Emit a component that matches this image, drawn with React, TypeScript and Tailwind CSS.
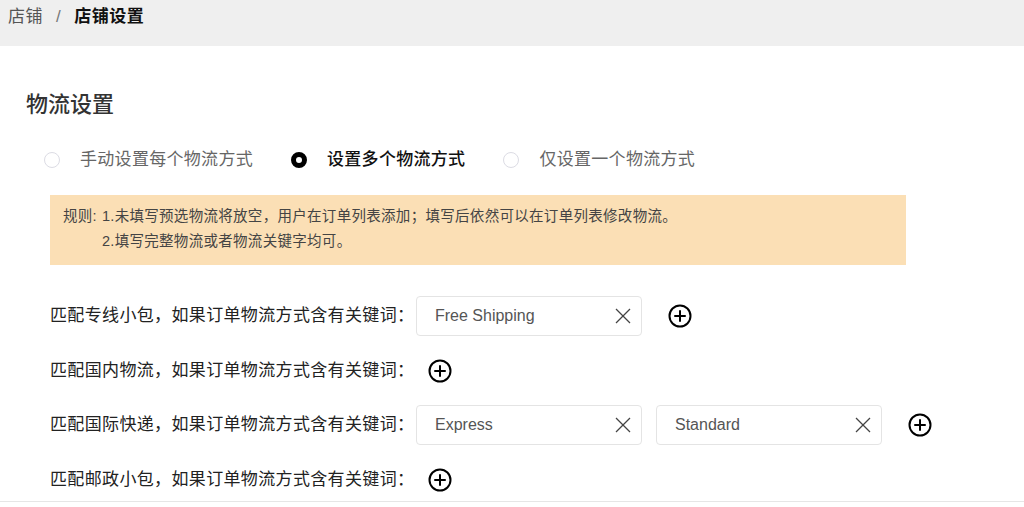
import React from "react";

const font = { fontFamily: '"Liberation Sans", "Noto Sans CJK SC", sans-serif' };

function Radio({ checked, label }: { checked?: boolean; label: string }) {
  return (
    <div className="flex items-center">
      {checked ? (
        <span className="box-border h-[16px] w-[16px] rounded-full border-[5px] border-black bg-white" />
      ) : (
        <span className="box-border h-[16px] w-[16px] rounded-full border border-[#dcdce4] bg-white" />
      )}
      <span
        className={
          "ml-[20px] text-[17px] leading-[24px] tracking-[0.3px] " +
          (checked ? "font-medium text-[#111]" : "text-[#666]")
        }
      >
        {label}
      </span>
    </div>
  );
}

function PlusIcon({ className }: { className?: string }) {
  return (
    <svg
      className={className}
      width="24"
      height="24"
      viewBox="0 0 24 24"
      fill="none"
      stroke="#000"
      strokeWidth="2"
      strokeLinecap="round"
    >
      <circle cx="12" cy="12" r="10.5" />
      <line x1="12" y1="7" x2="12" y2="17" />
      <line x1="7" y1="12" x2="17" y2="12" />
    </svg>
  );
}

function Tag({ text }: { text: string }) {
  return (
    <div className="mr-[14px] box-border flex h-[40px] w-[226px] items-center justify-between rounded-[4px] border border-[#e4e4e4] bg-white pl-[18px] pr-[9px]">
      <span className="text-[16px] text-[#555]">{text}</span>
      <svg width="18" height="18" viewBox="0 0 18 18" stroke="#444" strokeWidth="1.3" fill="none">
        <line x1="2" y1="2" x2="16" y2="16" />
        <line x1="16" y1="2" x2="2" y2="16" />
      </svg>
    </div>
  );
}

function Row({ label, tags }: { label: string; tags: string[] }) {
  return (
    <div className="flex h-[40px] items-center">
      <div className="w-[366px] text-[17px] leading-[24px] tracking-[0.35px] text-[#222]">{label}</div>
      {tags.map((t) => (
        <Tag key={t} text={t} />
      ))}
      <PlusIcon className="ml-[12px]" />
    </div>
  );
}

export default function App() {
  return (
    <div className="h-[507px] w-[1024px] overflow-hidden bg-white" style={font}>
      <div className="h-[46px] bg-[#efefef] pl-[8px] pt-[5px]">
        <div className="flex items-center text-[17px] leading-[24px] tracking-[0.5px]">
          <span className="text-[#555]">店铺</span>
          <span className="mx-[13px] text-[#777]">/</span>
          <span className="font-semibold text-[#111]">店铺设置</span>
        </div>
      </div>

      <div className="pt-[44px]">
        <div className="pl-[26px] text-[22px] font-medium leading-[30px] text-[#333]">物流设置</div>

        <div className="mt-[28px] flex gap-[38px] pl-[44px]">
          <Radio label="手动设置每个物流方式" />
          <Radio checked label="设置多个物流方式" />
          <Radio label="仅设置一个物流方式" />
        </div>

        <div className="ml-[50px] mt-[23px] box-border flex h-[70px] w-[856px] bg-[#fbdfb5] pl-[13px] pt-[9px] text-[14.5px] leading-[25px] tracking-[0.3px] text-[#444]">
          <span className="mr-[5px]">规则:</span>
          <div className="flex flex-col">
            <span>1.未填写预选物流将放空，用户在订单列表添加；填写后依然可以在订单列表修改物流。</span>
            <span>2.填写完整物流或者物流关键字均可。</span>
          </div>
        </div>

        <div className="mt-[31px] flex flex-col gap-[14.7px] pl-[50px]">
          <Row label="匹配专线小包，如果订单物流方式含有关键词：" tags={["Free Shipping"]} />
          <Row label="匹配国内物流，如果订单物流方式含有关键词：" tags={[]} />
          <Row label="匹配国际快递，如果订单物流方式含有关键词：" tags={["Express", "Standard"]} />
          <Row label="匹配邮政小包，如果订单物流方式含有关键词：" tags={[]} />
        </div>

        <div className="mt-[1px] border-t border-[#e6e6e6]" />
      </div>
    </div>
  );
}
